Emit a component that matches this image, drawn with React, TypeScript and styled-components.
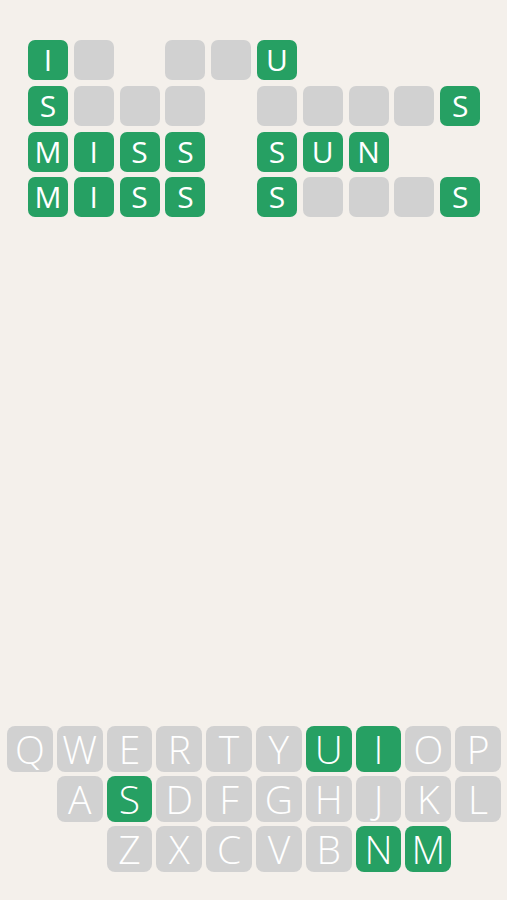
import styled, { createGlobalStyle } from "styled-components";

const GlobalStyle = createGlobalStyle`
  * { margin: 0; padding: 0; box-sizing: border-box; }
  body { background: #f4f0eb; font-family: "Open Sans", "Noto Sans", sans-serif; }
`;

const GREEN = "#26a063";
const GRAY = "#d1d1d1";

// tela inteira: grade em cima, teclado em baixo
const Page = styled.div`
  min-height: 100vh;
  display: flex;
  flex-direction: column;
  justify-content: space-between;
  padding: 40px 0 28px;
`;

const Board = styled.div`
  display: grid;
  grid-template-columns: repeat(10, 40px);
  grid-auto-rows: 40px;
  gap: 5.8px;
  padding-left: 28px;
`;

type Kind = "g" | "x" | ".";

const Tile = styled.div<{ $kind: Kind }>`
  border-radius: 7px;
  background: ${(p) => (p.$kind === "g" ? GREEN : p.$kind === "x" ? GRAY : "transparent")};
  color: #fff;
  font-size: 30px;
  font-weight: 400;
  line-height: 40px;
  text-align: center;
`;

const Keyboard = styled.div`
  display: grid;
  grid-template-columns: repeat(10, 1fr);
  grid-auto-rows: 46px;
  gap: 4px 4px;
  padding: 0 6px 0 7px;
`;

const Key = styled.div<{ $on?: boolean; $col?: number }>`
  grid-column: ${(p) => (p.$col ? `${p.$col} / span 1` : "auto")};
  border-radius: 8px;
  background: ${(p) => (p.$on ? GREEN : GRAY)};
  color: #fff;
  font-size: 39px;
  font-weight: 300;
  line-height: 46px;
  text-align: center;
`;

// cada linha: 10 colunas, "." = vazio, "_" = cinza, letra = verde
const rows = [
  "I_.__U....",
  "S___.____S",
  "MISS.SUN..",
  "MISS.S___S",
];

const keyRows = ["QWERTYUIOP", "ASDFGHJKL", "ZXCVBNM"];
const greenKeys = "UISNM";

const App = () => {
  return (
    <>
      <GlobalStyle />
      <Page>
        <Board>
          {rows.map((row, r) =>
            row.split("").map((ch, c) => {
              const kind: Kind = ch === "." ? "." : ch === "_" ? "x" : "g";
              return (
                <Tile key={`${r}-${c}`} $kind={kind}>
                  {kind === "g" ? ch : ""}
                </Tile>
              );
            })
          )}
        </Board>
        <Keyboard>
          {keyRows.map((row, r) =>
            row.split("").map((ch, i) => (
              <Key key={ch} $on={greenKeys.includes(ch)} $col={i === 0 ? r + 1 : undefined}>
                {ch}
              </Key>
            ))
          )}
        </Keyboard>
      </Page>
    </>
  );
};

export default App;
